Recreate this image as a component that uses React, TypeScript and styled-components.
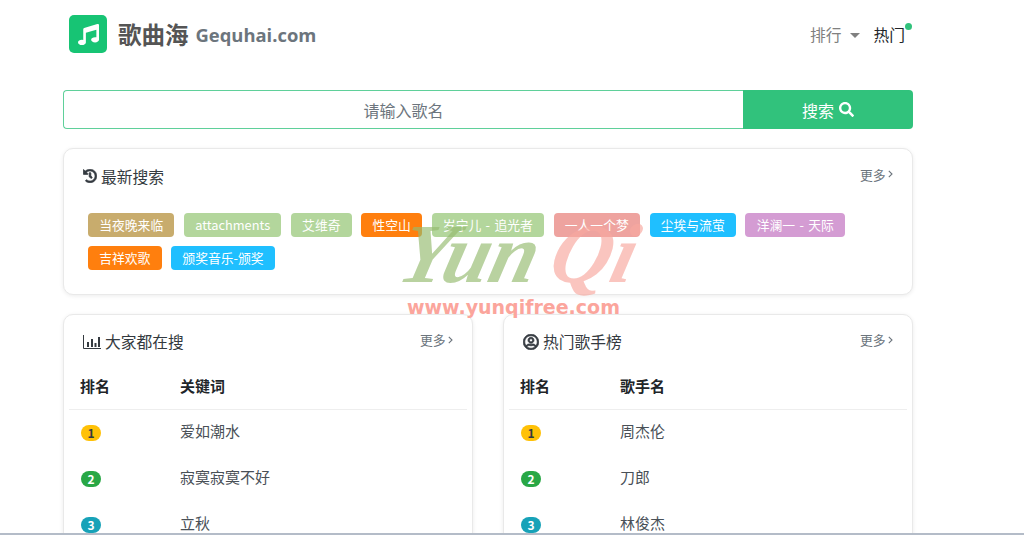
import React from "react"
import styled, { createGlobalStyle } from "styled-components"
import { FaHistory, FaMusic, FaRegUserCircle, FaSearch } from "react-icons/fa"

const GlobalStyle = createGlobalStyle`
  html, body {
    margin: 0;
    padding: 0;
    height: 100%;
    overflow: hidden;
    background: #fff;
    font-family: "Noto Sans CJK SC", "Noto Sans", sans-serif;
    color: #343a40;
  }
  * {
    box-sizing: border-box;
  }
`

const latestTags = [
  { label: "当夜晚来临", color: "#c8ac6d" },
  { label: "attachments", color: "#b3d69c" },
  { label: "艾维奇", color: "#b3d69c" },
  { label: "性空山", color: "#ff7f0e" },
  { label: "岁宁儿 - 追光者", color: "#b3d69c" },
  { label: "一人一个梦", color: "#eea39f" },
  { label: "尘埃与流萤", color: "#1fbfff" },
  { label: "洋澜一 - 天际", color: "#d49cd3" },
  { label: "吉祥欢歌", color: "#ff7f0e" },
  { label: "颁奖音乐-颁奖", color: "#1fbfff" },
]

const keywords = ["爱如潮水", "寂寞寂寞不好", "立秋"]
const singers = ["周杰伦", "刀郎", "林俊杰"]

const rankColors = [
  { bg: "#ffc107", fg: "#343a40" },
  { bg: "#28a745", fg: "#fff" },
  { bg: "#17a2b8", fg: "#fff" },
]

const ChartIcon = () => (
  <svg width="18" height="14" viewBox="0 0 18 14" fill="none">
    <path d="M.5 0v13.500H18" stroke="#343a40" />
    <path d="M4 7h2v5H4zM8 4h2v8H8zM11.500 8h2v4h-2zM15 2h2v10h-2z" fill="#343a40" />
  </svg>
)

const RankTable = ({ heading, items }: { heading: string; items: string[] }) => (
  <>
    <TableHead>
      <RankCell>排名</RankCell>
      <span>{heading}</span>
    </TableHead>
    {items.map((item, i) => (
      <TableRow key={item}>
        <RankCell>
          <RankBadge $bg={rankColors[i].bg} $fg={rankColors[i].fg}>
            {i + 1}
          </RankBadge>
        </RankCell>
        <span>{item}</span>
      </TableRow>
    ))}
  </>
)

const MoreLink = () => (
  <More>
    更多
    <svg width="5" height="8" viewBox="0 0 5 8" fill="none">
      <path d="M.8.8L4 4 .8 7.200" stroke="#6c757d" strokeWidth="1.100" />
    </svg>
  </More>
)

export default function App() {
  return (
    <Page>
      <GlobalStyle />
      <Header>
        <Brand>
          <LogoBox>
            <FaMusic size={21} color="#fff" />
          </LogoBox>
          <BrandName>歌曲海</BrandName>
          <BrandDomain>Gequhai.com</BrandDomain>
        </Brand>
        <Nav>
          <NavItem>
            排行
            <Caret />
          </NavItem>
          <HotItem>
            热门
            <HotDot />
          </HotItem>
        </Nav>
      </Header>

      <SearchBar>
        <SearchInput placeholder="请输入歌名" />
        <SearchButton>
          搜索 <FaSearch size={15} />
        </SearchButton>
      </SearchBar>

      <Card>
        <CardHead>
          <CardTitle>
            <FaHistory size={14} stroke="currentColor" strokeWidth={24} />
            最新搜索
          </CardTitle>
          <MoreLink />
        </CardHead>
        <TagList>
          {latestTags.map((tag) => (
            <Tag key={tag.label} $bg={tag.color}>
              {tag.label}
            </Tag>
          ))}
        </TagList>
      </Card>

      <Columns>
        <Card>
          <CardHead>
            <CardTitle>
              <ChartIcon />
              大家都在搜
            </CardTitle>
            <MoreLink />
          </CardHead>
          <RankTable heading="关键词" items={keywords} />
        </Card>
        <Card>
          <CardHead>
            <CardTitle>
              <FaRegUserCircle size={16} stroke="currentColor" strokeWidth={24} />
              热门歌手榜
            </CardTitle>
            <MoreLink />
          </CardHead>
          <RankTable heading="歌手名" items={singers} />
        </Card>
      </Columns>

      <Watermark>
        <WatermarkName>
          <WatermarkGreen>Yun</WatermarkGreen>
          <WatermarkRed>Qi</WatermarkRed>
        </WatermarkName>
        <WatermarkUrl>www.yunqifree.com</WatermarkUrl>
      </Watermark>
      <BottomLine />
    </Page>
  )
}

const Page = styled.div`
  width: 850px;
  margin-left: 63px;
`

const Header = styled.header`
  height: 90px;
  display: flex;
  justify-content: space-between;
  align-items: flex-start;
`

const Brand = styled.div`
  display: flex;
  align-items: center;
  height: 38px;
  margin: 15px 0 0 6px;
`

const LogoBox = styled.div`
  width: 38px;
  height: 38px;
  border-radius: 5px;
  background: #17c474;
  display: flex;
  align-items: center;
  justify-content: center;
  margin-right: 11px;
`

const BrandName = styled.span`
  font-size: 23.500px;
  font-weight: 700;
  color: #555;
  margin-right: 7px;
`

const BrandDomain = styled.span`
  font-family: "Open Sans", sans-serif;
  font-size: 18.400px;
  font-weight: 700;
  color: #6c757d;
  margin-top: 1px;
`

const Nav = styled.nav`
  display: flex;
  align-items: center;
  gap: 14px;
  margin: 23px 8px 0 0;
  font-size: 15.750px;
  line-height: 24px;
`

const NavItem = styled.span`
  display: flex;
  align-items: center;
  gap: 8px;
  color: #808080;
`

const Caret = styled.i`
  width: 0;
  height: 0;
  border: 5px solid transparent;
  border-top-color: #808080;
  border-bottom: 0;
`

const HotItem = styled.span`
  position: relative;
  color: #212529;
`

const HotDot = styled.i`
  position: absolute;
  top: 0;
  right: -7px;
  width: 7px;
  height: 7px;
  border-radius: 50%;
  background: #31c27c;
`

const SearchBar = styled.div`
  display: flex;
  height: 39px;
  margin-bottom: 19px;
`

const SearchInput = styled.input`
  flex: 1;
  min-width: 0;
  border: 1px solid #5fd09a;
  border-right: 0;
  border-radius: 4px 0 0 4px;
  outline: none;
  text-align: center;
  font: inherit;
  font-size: 16px;
  &::placeholder {
    color: #6c757d;
    opacity: 1;
  }
`

const SearchButton = styled.button`
  width: 170px;
  border: 0;
  border-radius: 0 4px 4px 0;
  background: #31c27c;
  color: #fff;
  font: inherit;
  font-size: 16px;
  display: flex;
  align-items: center;
  justify-content: center;
  gap: 5px;
`

const Card = styled.section`
  background: #fff;
  border: 1px solid #e9e9e9;
  border-radius: 10px;
  box-shadow: 0 1px 4px rgba(0, 0, 0, 0.08);
  padding: 0 5px;
  min-width: 0;
`

const CardHead = styled.div`
  display: flex;
  justify-content: space-between;
  align-items: center;
  height: 54px;
  padding: 0 14px;
`

const CardTitle = styled.h2`
  display: flex;
  align-items: center;
  gap: 4px;
  margin: 0;
  font-size: 15.750px;
  font-weight: 400;
  color: #343a40;
`

const More = styled.span`
  display: flex;
  align-items: center;
  gap: 2.500px;
  margin-top: -4px;
  font-size: 12.800px;
  color: #6c757d;
`

const TagList = styled.div`
  display: flex;
  flex-wrap: wrap;
  gap: 9.600px;
  padding: 10px 19px 24px;
`

const Tag = styled.span<{ $bg: string }>`
  height: 23.500px;
  line-height: 23px;
  padding: 0 11.200px;
  border-radius: 4px;
  font-size: 12.800px;
  word-spacing: 1.500px;
  color: #fff;
  background: ${({ $bg }) => $bg};
`

const Columns = styled.div`
  display: grid;
  grid-template-columns: 410px 410px;
  gap: 30px;
  margin-top: 19px;
`

const TableHead = styled.div`
  display: flex;
  align-items: center;
  height: 41px;
  padding: 0 11px 7px;
  border-bottom: 1px solid #eee;
  font-size: 15px;
  font-weight: 700;
  color: #212529;
`

const TableRow = styled.div`
  display: flex;
  align-items: center;
  height: 46px;
  padding: 0 11px 4px;
  font-size: 15px;
  color: #495057;
`

const RankCell = styled.span`
  width: 100px;
  display: flex;
  align-items: center;
`

const RankBadge = styled.span<{ $bg: string; $fg: string }>`
  width: 20px;
  height: 16px;
  margin: 4px 0 0 1px;
  border-radius: 8px;
  display: flex;
  align-items: center;
  justify-content: center;
  font-size: 12px;
  font-weight: 700;
  background: ${({ $bg }) => $bg};
  color: ${({ $fg }) => $fg};
`

const Watermark = styled.div`
  position: absolute;
  left: 402px;
  top: 212px;
  width: 240px;
  pointer-events: none;
`

const WatermarkName = styled.div`
  font-family: "Liberation Serif", serif;
  font-style: italic;
  font-weight: 700;
  font-size: 84px;
  line-height: 84px;
  white-space: nowrap;
  transform: skewX(-14deg);
  opacity: 0.66;
`

const WatermarkGreen = styled.span`
  color: #95bb70;
  margin-right: 14px;
`

const WatermarkRed = styled.span`
  color: #f8a89f;
`

const WatermarkUrl = styled.div`
  font-family: "DejaVu Sans", sans-serif;
  font-size: 19px;
  font-weight: 700;
  line-height: 22px;
  color: #fba59c;
  margin-left: 5px;
  white-space: nowrap;
`

const BottomLine = styled.div`
  position: fixed;
  left: 0;
  right: 0;
  bottom: 0;
  height: 2px;
  background: #b4bcc8;
`
